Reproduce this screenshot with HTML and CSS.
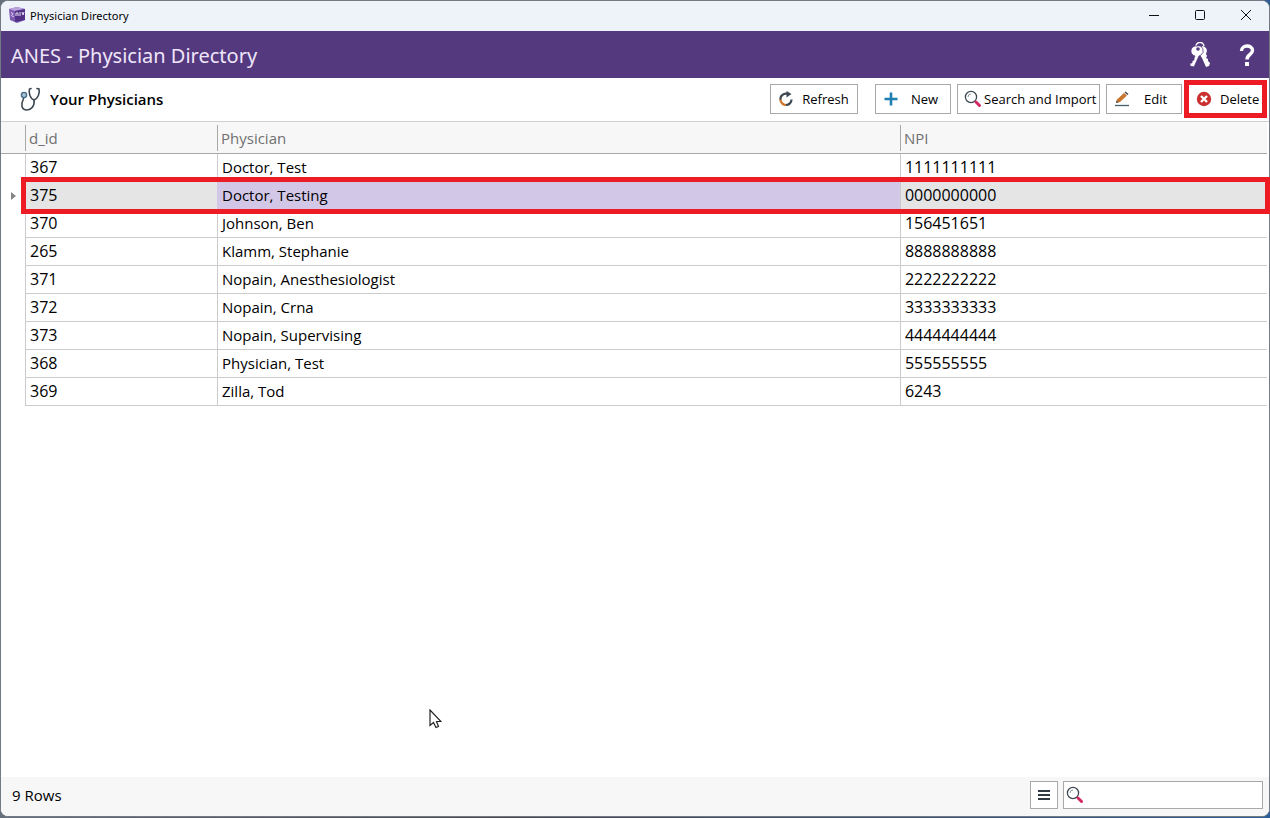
FILE: index.html
```
<!DOCTYPE html>
<html lang="en">
  <head>
    <meta charset="UTF-8" />
    <meta name="viewport" content="width=device-width, initial-scale=1.0" />
    <title>Physician Directory</title>
    <link rel="stylesheet" href="styles.css">
  </head>
  <body>
    <div class="window">
      <header class="titlebar">
        <svg class="app-icon" width="16" height="16" viewBox="0 0 16 16">
          <path d="M0 2L8 0L16 2V13L8 16L1 13Z" fill="#7e5bb0" />
          <path d="M0 2L8 0L16 2L6 4Z" fill="#b9a3dc" />
          <path d="M6 4L16 2V13L6 15Z" fill="#513085" />
          <path d="M2 6c2-1 2 1 1 2s1 2 2 1M7 9V6h2v3M10 6h2M10 8h2M13 5l1 3l1-3" fill="none" stroke="#e6dcf5" />
        </svg>
        <span class="window-title">Physician Directory</span>
        <div class="window-buttons">
          <button aria-label="Minimize"><svg width="12" height="12" viewBox="0 0 12 12"><path d="M1 6.5H11" /></svg></button>
          <button aria-label="Maximize"><svg width="12" height="12" viewBox="0 0 12 12"><rect x="1.5" y="1.5" width="9" height="9" rx="1" /></svg></button>
          <button aria-label="Close"><svg width="12" height="12" viewBox="0 0 12 12"><path d="M1 1L11 11M11 1L1 11" /></svg></button>
        </div>
      </header>

      <div class="banner">
        <h1>ANES - Physician Directory</h1>
        <button aria-label="Keys">
          <svg width="22" height="28" viewBox="0 0 22 28">
            <path d="M7 5a4 4 0 0 1 8-1" fill="none" stroke="#fff" stroke-width="1.5" />
            <path d="M13 4a5 5 0 0 1 4 8l1 2l-1 2l2 1v2l2 2l-1 3l-3 1l-4-9l-2-3Z" fill="#fff" />
            <path d="M8 4a5 5 0 0 1 4 9l-2 1l-5 11l-4-1v-3l2 0v-2l2-1v-2l1-2a5 5 0 0 1 2-10Z" fill="#fff" stroke="#54397f" stroke-width="0.8" />
            <circle cx="9" cy="7" r="1.8" fill="#54397f" />
          </svg>
        </button>
        <button aria-label="Help">
          <svg width="16" height="24" viewBox="0 0 16 24">
            <path d="M2.500 7C2.500 0.500 13.500 0.500 13.500 6.500C13.500 10.500 8 10.500 8 15.500" fill="none" stroke="#fff" stroke-width="3.400" />
            <rect x="6" y="18" width="4" height="4" fill="#fff" />
          </svg>
        </button>
      </div>

      <div class="toolbar">
        <svg width="22" height="26" viewBox="0 0 22 26" fill="none" stroke="#3d4852" stroke-width="1.600" stroke-linecap="round">
          <path d="M12 2.500L10.500 3C9.500 7 11 12.500 15 14C19 12.500 21 7 20 3L18 2.500" />
          <path d="M15 14C16 20 12 24 8 24C2 24 2 18 4 14L5 11" />
          <circle cx="5" cy="9" r="2.500" fill="#cfe3ee" stroke="#46708c" />
          <circle cx="5" cy="9" r="0.600" fill="#46708c" stroke="none" />
        </svg>
        <h2>Your Physicians</h2>
        <div class="actions">
          <button class="btn refresh">
            <svg width="16" height="16" viewBox="0 0 16 16" fill="none" stroke-width="2.200">
              <path d="M10 3A5.500 5.500 0 0 0 2.500 9" stroke="#3d4852" />
              <path d="M2.500 8.500A5.500 5.500 0 0 0 8 14" stroke="#d0752c" />
              <path d="M8 14A5.500 5.500 0 0 0 13.500 8.500" stroke="#3d4852" />
              <path d="M8.500 0L13.500 3L8.500 6.500Z" fill="#3d4852" />
            </svg>
            <span>Refresh</span>
          </button>
          <button class="btn">
            <svg width="16" height="16" viewBox="0 0 16 16"><path d="M8 1.500V14.500M1.500 8H14.500" stroke="#1f7fb0" stroke-width="2.600" /></svg>
            <span>New</span>
          </button>
          <button class="btn search-import">
            <svg width="18" height="18" viewBox="0 0 18 18" fill="none">
              <circle cx="7" cy="7" r="5.600" stroke="#3d4852" stroke-width="1.300" />
              <path d="M4 7A3 3 0 0 1 7 4" stroke="#8c959c" />
              <path d="M12 12L15.500 15.500" stroke="#d02a62" stroke-width="3" stroke-linecap="round" />
            </svg>
            <span>Search and Import</span>
          </button>
          <button class="btn">
            <svg width="16" height="16" viewBox="0 0 16 16">
              <path d="M1 14.500H15" stroke="#46606f" stroke-width="1.300" />
              <path d="M2 12L3 8.500L10 2L13 4.500L6 11Z" fill="#c87530" />
              <path d="M2 12L2.600 9.600L4.500 11.300Z" fill="#3d4852" />
              <path d="M10.500 1.500L11.500 0.500L14.500 3L13.500 4Z" fill="#3d4852" />
            </svg>
            <span>Edit</span>
          </button>
          <button class="btn delete">
            <svg width="16" height="16" viewBox="0 0 16 16">
              <circle cx="8" cy="8" r="7.200" fill="#c9302f" />
              <path d="M5 5L11 11M11 5L5 11" stroke="#fff" stroke-width="2.400" />
            </svg>
            <span>Delete</span>
          </button>
        </div>
      </div>

      <main>
        <table>
          <colgroup>
            <col class="col-marker" />
            <col class="col-id" />
            <col />
            <col class="col-npi" />
          </colgroup>
          <thead>
            <tr>
              <td></td>
              <th scope="col">d_id</th>
              <th scope="col">Physician</th>
              <th scope="col">NPI</th>
            </tr>
          </thead>
          <tbody>
            <tr><td></td><td class="num">367</td><td>Doctor, Test</td><td class="num">1111111111</td></tr>
            <tr class="selected"><td><svg width="5" height="8" viewBox="0 0 5 8"><path d="M0 0L5 4L0 8Z" fill="#858585" /></svg></td><td class="num">375</td><td class="focused">Doctor, Testing</td><td class="num">0000000000</td></tr>
            <tr><td></td><td class="num">370</td><td>Johnson, Ben</td><td class="num">156451651</td></tr>
            <tr><td></td><td class="num">265</td><td>Klamm, Stephanie</td><td class="num">8888888888</td></tr>
            <tr><td></td><td class="num">371</td><td>Nopain, Anesthesiologist</td><td class="num">2222222222</td></tr>
            <tr><td></td><td class="num">372</td><td>Nopain, Crna</td><td class="num">3333333333</td></tr>
            <tr><td></td><td class="num">373</td><td>Nopain, Supervising</td><td class="num">4444444444</td></tr>
            <tr><td></td><td class="num">368</td><td>Physician, Test</td><td class="num">555555555</td></tr>
            <tr><td></td><td class="num">369</td><td>Zilla, Tod</td><td class="num">6243</td></tr>
          </tbody>
        </table>
      </main>

      <footer>
        <span class="row-count">9 Rows</span>
        <button class="menu-btn" aria-label="Menu">
          <svg width="12" height="12" viewBox="0 0 12 12"><path d="M0 2H12M0 6H12M0 10H12" stroke="#2f3a44" stroke-width="2" /></svg>
        </button>
        <label class="search-box">
          <svg width="18" height="18" viewBox="0 0 18 18" fill="none">
            <circle cx="7" cy="7" r="5.600" stroke="#3d4852" stroke-width="1.300" />
            <path d="M4 7A3 3 0 0 1 7 4" stroke="#8c959c" />
            <path d="M12 12L15.500 15.500" stroke="#d02a62" stroke-width="3" stroke-linecap="round" />
          </svg>
          <input type="text" aria-label="Search rows" />
        </label>
      </footer>
    </div>

    <svg class="cursor" width="13" height="20" viewBox="0 0 13 20">
      <path d="M1 1V16.500L4.500 13.500L7 18.500L9.500 17.500L7.500 12.500H12Z" fill="#fff" stroke="#222" stroke-width="1.200" />
    </svg>
  </body>
</html>
```
FILE: styles.css
```
* {
  margin: 0;
  padding: 0;
  box-sizing: border-box;
}
body {
  height: 100vh;
  padding-bottom: 1px;
  background: linear-gradient(to right, #66707c, #4c4650 40%, #2d5f96);
  font-family: "Open Sans", "Noto Sans", sans-serif;
  font-size: 15px;
  color: #000;
}
button {
  background: transparent;
  border: none;
  font-family: inherit;
  color: inherit;
  cursor: pointer;
}
svg {
  flex-shrink: 0;
}
.window {
  height: 100%;
  display: flex;
  flex-direction: column;
  border: 1px solid #747a84;
  border-radius: 8px;
  background: white;
}

/* title bar */
.titlebar {
  height: 30px;
  display: flex;
  align-items: center;
  padding: 0 0 2px 8px;
  background: #eef3fa;
  border-radius: 7px 7px 0 0;
}
.window-title {
  margin-left: 5px;
  font-family: "Noto Sans", sans-serif;
  font-size: 11px;
}
.window-buttons {
  margin-left: auto;
  display: flex;
}
.window-buttons button {
  width: 46px;
  height: 28px;
  display: flex;
  align-items: center;
  justify-content: center;
}
.window-buttons svg {
  fill: none;
  stroke: #111;
}

/* purple banner */
.banner {
  height: 47px;
  display: flex;
  align-items: center;
  gap: 28px;
  padding: 2px 14px 0 10px;
  background: #54397f;
}
.banner h1 {
  flex: 1;
  font-family: "Noto Sans", sans-serif;
  font-size: 20px;
  font-weight: 400;
  color: #efe6fa;
}
.banner button {
  display: flex;
}

/* toolbar */
.toolbar {
  height: 44px;
  display: flex;
  align-items: center;
  padding: 0 6px 2px 18px;
  border-bottom: 1px solid #d0d0d0;
}
.toolbar h2 {
  margin-left: 9px;
  font-size: 15px;
  font-weight: 600;
}
.actions {
  margin-left: auto;
  display: flex;
  gap: 6px;
}
.btn {
  width: 76px;
  height: 30px;
  display: flex;
  align-items: center;
  padding: 0 8px 0 7px;
  border: 1px solid #a8a8a8;
  background: white;
  font-size: 13px;
  white-space: nowrap;
}
.btn span {
  flex: 1;
  text-align: center;
  padding-left: 8px;
}
.btn.refresh {
  width: 88px;
  margin-right: 11px;
}
.btn.search-import {
  width: 143px;
  padding: 0 4px 0 6px;
}
.btn.search-import span {
  padding-left: 2px;
}
.btn.delete {
  width: 75px;
  outline: 5px solid #ed1c24;
  outline-offset: -1px;
}

/* grid */
main {
  flex: 1;
  padding-right: 2px;
}
table {
  width: 100%;
  table-layout: fixed;
  border-collapse: separate;
  border-spacing: 0;
}
.col-marker {
  width: 24px;
}
.col-id {
  width: 192px;
}
.col-npi {
  width: 29%;
}
thead th,
thead td {
  height: 32px;
  background: linear-gradient(#a8a8a8, #a8a8a8) 0 3px / 1px 26px no-repeat #f7f7f7;
  border-bottom: 1px solid #a8a8a8;
}
thead td {
  background: #f7f7f7;
}
thead th {
  padding-left: 4px;
  text-align: left;
  font-weight: 400;
  color: #707070;
}
tbody td {
  height: 28px;
  padding: 0 0 1px 4px;
  line-height: 20px;
  border-left: 1px solid #ccc;
  border-bottom: 1px solid #ccc;
}
tbody td:first-child {
  padding: 0 0 0 10px;
  border: none;
  line-height: 0;
}
.num {
  font-size: 16px;
}
.selected {
  position: relative;
}
.selected td {
  background: #e5e5e5;
}
.selected td:first-child {
  background: white;
}
.selected td.focused {
  background: #d2c7e7;
  border-left-color: #d2c7e7;
}
/* frame is placed against the whole row */
.selected td.focused::after {
  content: "";
  position: absolute;
  inset: -5px -3px -4px 20px;
  border: 5px solid #ed1c24;
}

/* footer */
footer {
  height: 39px;
  display: flex;
  align-items: center;
  padding: 0 6px 3px 11px;
  background: #f7f7f7;
  border-radius: 0 0 7px 7px;
}
.row-count {
  flex: 1;
}
.menu-btn {
  width: 28px;
  height: 28px;
  display: flex;
  align-items: center;
  justify-content: center;
  margin-right: 5px;
  border: 1px solid #a8a8a8;
  background: white;
}
.search-box {
  width: 200px;
  height: 28px;
  display: flex;
  align-items: center;
  padding-left: 2px;
  border: 1px solid #a8a8a8;
  background: white;
}
.search-box input {
  flex: 1;
  min-width: 0;
  border: none;
  outline: none;
  font-size: 15px;
}

/* mouse pointer lies over the page */
.cursor {
  position: absolute;
  left: 429px;
  top: 709px;
}
```
